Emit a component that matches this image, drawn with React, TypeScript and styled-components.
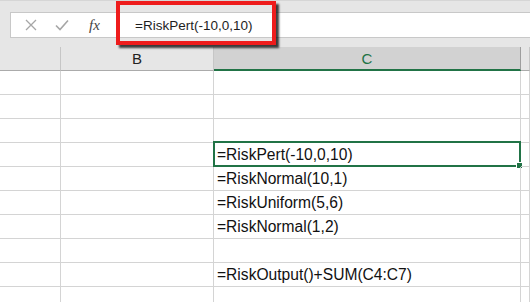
import styled, { createGlobalStyle } from 'styled-components';

const GlobalStyle = createGlobalStyle`
  html, body {
    margin: 0;
    padding: 0;
    background: #ffffff;
    overflow: hidden;
  }
  * { box-sizing: border-box; }
`;

const Page = styled.div`
  width: 530px;
  height: 302px;
  display: flex;
  flex-direction: column;
  font-family: 'Liberation Sans', Arial, sans-serif;
  position: relative;
  overflow: hidden;
`;

const Ribbon = styled.div`
  flex-shrink: 0;
  height: 47px;
  background: #e6e6e6;
  border-top: 1px solid #d6d6d6;
  padding: 11px 0 0 10px;
`;

const FormulaBar = styled.div`
  height: 26px;
  background: #ffffff;
  border: 1px solid #c8c8c8;
  border-right: none;
  display: flex;
  align-items: center;
`;

const IconGroup = styled.div`
  width: 112px;
  display: flex;
  align-items: center;
  padding-left: 13px;
  gap: 17px;
`;

const BarIcon = styled.span`
  width: 14px;
  height: 14px;
  display: flex;
  align-items: center;
  justify-content: center;
`;

const Fx = styled.span`
  font-family: 'Liberation Serif', 'Times New Roman', serif;
  font-style: italic;
  font-size: 15px;
  color: #444444;
  margin-left: 3px;
`;

const FormulaText = styled.div`
  padding-left: 12px;
  font-size: 13.5px;
  color: #1e1e1e;
`;

const Highlight = styled.div`
  position: absolute;
  left: 116px;
  top: 1px;
  width: 160px;
  height: 44px;
  border: 4px solid #ee1c1c;
  box-shadow: 3px 3px 2px rgba(0, 0, 0, 0.75);
`;

const Sheet = styled.div`
  flex-shrink: 0;
  display: grid;
  grid-template-columns: 61px 153px 307px 1fr;
  grid-auto-rows: 24px;
`;

const HeadCell = styled.div<{ $active?: boolean }>`
  background: ${(p) => (p.$active ? '#d2d2d2' : '#e6e6e6')};
  border-right: 1px solid ${(p) => (p.$active ? '#9e9e9e' : '#c6c6c6')};
  border-bottom: ${(p) => (p.$active ? '2px solid #217346' : '1px solid #ababab')};
  color: ${(p) => (p.$active ? '#217346' : '#222222')};
  font-family: 'Liberation Sans', Arial, sans-serif;
  font-size: 15px;
  display: flex;
  align-items: center;
  justify-content: center;
  padding-top: ${(p) => (p.$active ? '1px' : '0')};
`;

const Cell = styled.div<{ $selected?: boolean }>`
  position: relative;
  border-right: 1px solid #d4d4d4;
  border-bottom: 1px solid #d4d4d4;
  font-size: 15.6px;
  color: #111111;
  padding: 0 0 2px 3px;
  display: flex;
  align-items: flex-end;
  white-space: nowrap;

  ${(p) =>
    p.$selected &&
    `
    &::before {
      content: '';
      position: absolute;
      left: -1px;
      top: -2px;
      right: -1px;
      bottom: -1px;
      border: 2px solid #217346;
    }
    &::after {
      content: '';
      position: absolute;
      right: -3px;
      bottom: -3px;
      width: 5px;
      height: 5px;
      background: #217346;
      border: 1px solid #ffffff;
    }
  `}
`;

const rows = [
  '',
  '',
  '',
  '=RiskPert(-10,0,10)',
  '=RiskNormal(10,1)',
  '=RiskUniform(5,6)',
  '=RiskNormal(1,2)',
  '',
  '=RiskOutput()+SUM(C4:C7)',
  '',
];

function App() {
  return (
    <Page>
      <GlobalStyle />
      <Ribbon>
        <FormulaBar>
          <IconGroup>
            <BarIcon>
              <svg width="12" height="12" viewBox="0 0 12 12">
                <path d="M1 1 L11 11 M11 1 L1 11" stroke="#a6a6a6" strokeWidth="1.3" fill="none" />
              </svg>
            </BarIcon>
            <BarIcon>
              <svg width="14" height="12" viewBox="0 0 14 12">
                <path d="M1 6.5 L5 10.5 L13 1.5" stroke="#a6a6a6" strokeWidth="1.6" fill="none" />
              </svg>
            </BarIcon>
            <Fx>fx</Fx>
          </IconGroup>
          <FormulaText>=RiskPert(-10,0,10)</FormulaText>
        </FormulaBar>
      </Ribbon>
      <Sheet>
        <HeadCell />
        <HeadCell>B</HeadCell>
        <HeadCell $active>C</HeadCell>
        <HeadCell />
        {rows.map((text, i) => [
          <Cell key={`a${i}`} />,
          <Cell key={`b${i}`} />,
          <Cell key={`c${i}`} $selected={i === 3}>
            {text}
          </Cell>,
          <Cell key={`d${i}`} />,
        ])}
      </Sheet>
      <Highlight />
    </Page>
  );
}

export default App;
